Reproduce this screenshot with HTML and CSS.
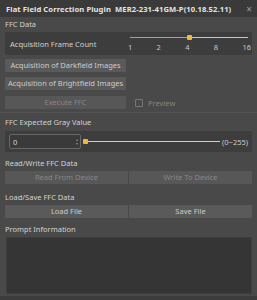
FILE: index.html
```html
<!DOCTYPE html>
<html lang="en">
<head>
    <meta charset="UTF-8">
    <meta name="viewport" content="width=device-width, initial-scale=1.0">
    <title>Flat Field Correction Plugin</title>
    <link rel="stylesheet" href="styles.css">
</head>
<body>
    <div class="window">
        <div class="titlebar">
            <span class="title">Flat Field Correction Plugin&nbsp;&nbsp;MER2-231-41GM-P(10.18.52.11)</span>
            <span class="close">&times;</span>
        </div>

        <div class="content">
            <div class="group-label first">FFC Data</div>
            <div class="panel frame-panel">
                <span class="panel-text">Acquisition Frame Count</span>
                <div class="frame-slider">
                    <div class="track">
                        <div class="track-fill" style="width: 50%;"></div>
                        <div class="handle" style="left: 50%;"></div>
                    </div>
                    <div class="ticks">
                        <span>1</span><span>2</span><span>4</span><span>8</span><span>16</span>
                    </div>
                </div>
            </div>

            <div class="btn-col">
                <button class="btn">Acquisition of Darkfield Images</button>
                <button class="btn">Acquisition of Brightfield Images</button>
                <div class="exec-row">
                    <button class="btn disabled">Execute FFC</button>
                    <label class="check"><span class="box"></span>Preview</label>
                </div>
            </div>

            <div class="separator"></div>

            <div class="group-label gray-label">FFC Expected Gray Value</div>
            <div class="panel gray-panel">
                <div class="spin">
                    <span>0</span>
                    <span class="arrows"><i>&#9652;</i><i>&#9662;</i></span>
                </div>
                <div class="gray-slider">
                    <div class="handle small"></div>
                    <div class="track plain"></div>
                </div>
                <span class="range">(0~255)</span>
            </div>

            <div class="group-label rw-label">Read/Write FFC Data</div>
            <div class="btn-row">
                <button class="btn disabled">Read From Device</button>
                <button class="btn disabled">Write To Device</button>
            </div>

            <div class="group-label ls-label">Load/Save FFC Data</div>
            <div class="btn-row">
                <button class="btn">Load File</button>
                <button class="btn">Save File</button>
            </div>

            <div class="group-label prompt-label">Prompt Information</div>
            <div class="prompt"></div>
        </div>
    </div>
</body>
</html>
```

FILE: styles.css
```css
* {
    box-sizing: border-box;
}
body {
    margin: 0;
    padding: 0;
    background: #494949;
    font-family: "Noto Sans", "Open Sans", sans-serif;
    font-size: 7.5px;
    color: #d2d2d2;
}
.window {
    width: 257px;
    height: 300px;
    background: #494949;
    border-bottom: 4px solid #3c3c3c;
    overflow: hidden;
}
.titlebar {
    height: 17px;
    background: #3a3a3a;
    display: flex;
    align-items: center;
    justify-content: space-between;
    padding: 0 5px 0 6px;
}
.title {
    font-weight: bold;
    color: #e4e4e4;
    font-size: 7.6px;
    letter-spacing: 0.1px;
}
.close {
    color: #9a9a9a;
    font-size: 10px;
}
.content {
    padding: 0 5px;
}
.group-label {
    height: 10px;
    line-height: 10px;
    color: #d2d2d2;
}
.group-label.first {
    margin-top: 2px;
}
.gray-label {
    margin-top: 4px;
}
.rw-label {
    margin-top: 6px;
}
.ls-label {
    margin-top: 8px;
}
.prompt-label {
    margin-top: 6px;
}
.panel {
    background: #3d3d3d;
    border-radius: 2px;
}
.frame-panel {
    margin-top: 3px;
    height: 23px;
    display: flex;
    align-items: center;
    justify-content: space-between;
    padding: 0 4px 0 5px;
}
.panel-text {
    padding-top: 1px;
}
.frame-slider {
    width: 118px;
    height: 23px;
    position: relative;
}
.track {
    position: absolute;
    top: 5px;
    left: 0;
    right: 0;
    height: 1px;
    background: #c8c8c8;
}
.track-fill {
    height: 1px;
    background: #c9a03a;
}
.handle {
    position: absolute;
    top: -2px;
    width: 5px;
    height: 5px;
    margin-left: -2px;
    background: #f2b83a;
    border-radius: 1px;
}
.ticks {
    position: absolute;
    top: 10px;
    left: -2px;
    right: -3px;
    display: flex;
    justify-content: space-between;
    color: #c8c8c8;
}
.btn-col {
    display: flex;
    flex-direction: column;
    gap: 5px;
    margin-top: 4px;
}
.btn {
    height: 13px;
    width: 121px;
    padding: 0;
    border: none;
    border-radius: 1px;
    background: #5a5a5a;
    color: #cccccc;
    font-family: inherit;
    font-size: 7.5px;
    line-height: 13px;
}
.btn.disabled {
    color: #878787;
    background: #575757;
}
.exec-row {
    display: flex;
    align-items: center;
    gap: 9px;
    margin-top: 1px;
}
.check {
    display: flex;
    align-items: center;
    gap: 5px;
    color: #858585;
}
.box {
    width: 8px;
    height: 8px;
    border: 1px solid #767676;
    border-radius: 1px;
}
.separator {
    height: 1px;
    background: #525252;
    margin: 3px -5px 0;
}
.gray-panel {
    margin-top: 4px;
    height: 21px;
    display: flex;
    align-items: center;
    padding: 0 4px;
}
.spin {
    width: 72px;
    height: 15px;
    border: 1px solid #676767;
    border-radius: 2px;
    background: #3a3a3a;
    display: flex;
    align-items: center;
    justify-content: space-between;
    padding: 0 2px 0 3px;
}
.arrows {
    display: flex;
    flex-direction: column;
    font-size: 4px;
    line-height: 4px;
    color: #8a8a8a;
}
.arrows i {
    font-style: normal;
}
.gray-slider {
    flex: 1;
    height: 5px;
    display: flex;
    align-items: center;
    margin-left: 2px;
}
.handle.small {
    position: static;
    margin: 0;
    flex: none;
}
.track.plain {
    position: static;
    flex: 1;
    background: #d0d0d0;
}
.range {
    margin-left: 2px;
    color: #c8c8c8;
}
.btn-row {
    display: flex;
    justify-content: space-between;
    margin-top: 3px;
}
.btn-row .btn {
    width: 123px;
}
.prompt {
    margin: 3px 0 0 1px;
    height: 57px;
    background: #353535;
    border: 1px solid #3e3e3e;
}
```
